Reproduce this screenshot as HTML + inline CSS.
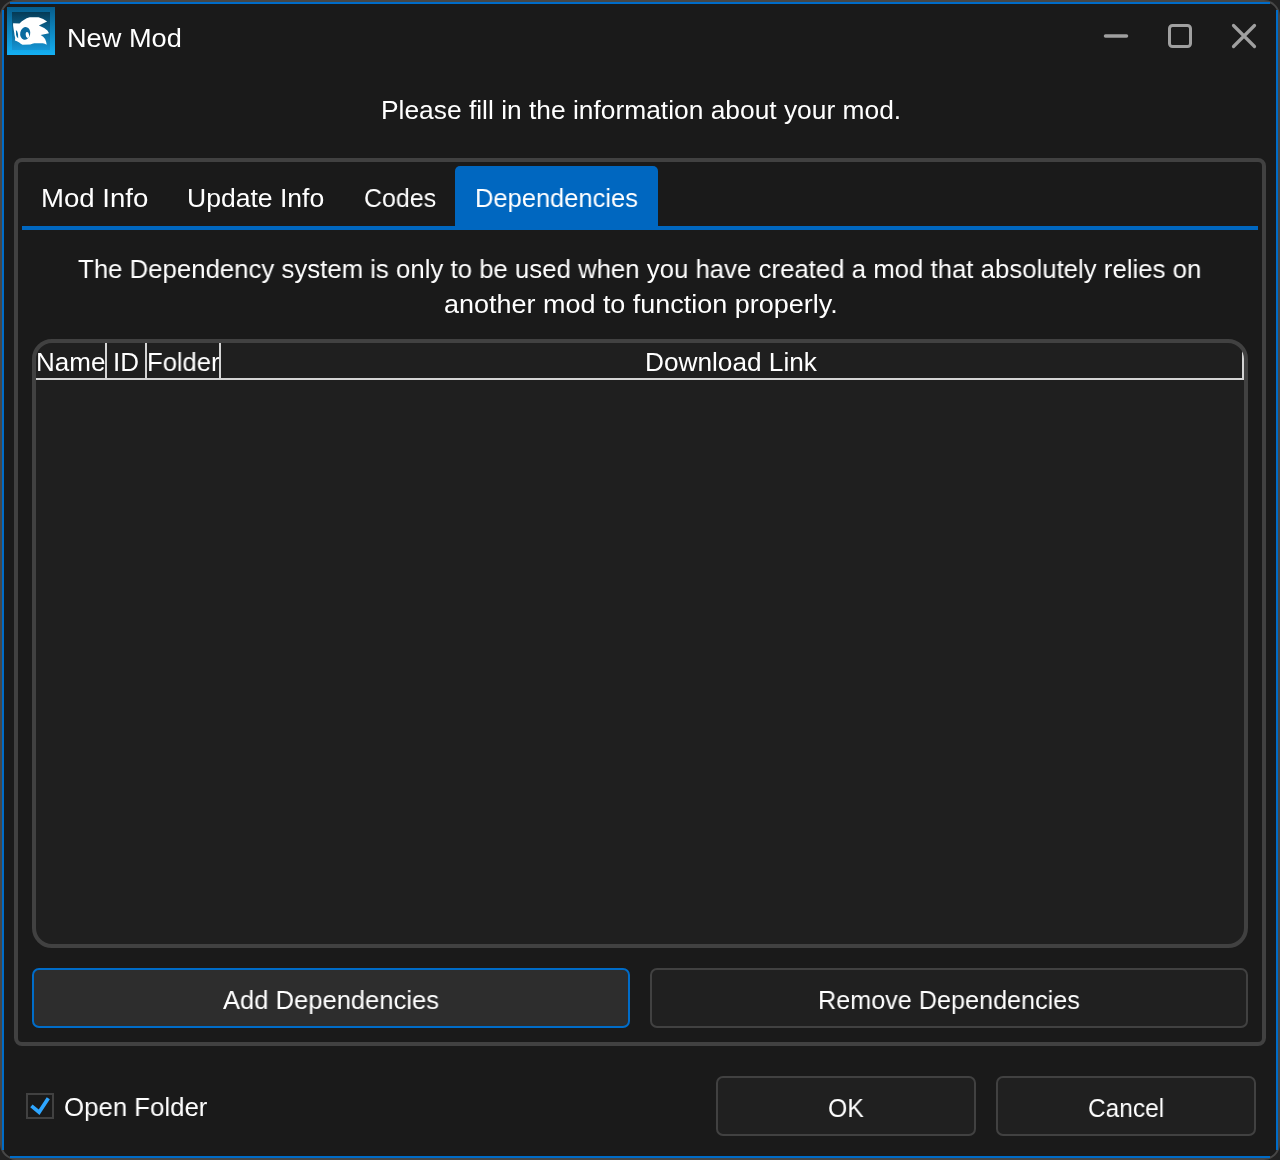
<!DOCTYPE html>
<html><head><meta charset="utf-8">
<style>
html,body{margin:0;padding:0;width:1280px;height:1160px;overflow:hidden;background:#222222;}
body{position:relative;font-family:"Liberation Sans",sans-serif;color:#fff;font-size:26px;}
.abs{position:absolute;}
.t{position:absolute;white-space:nowrap;line-height:30px;height:30px;transform-origin:0 0;will-change:transform;}
#frame{position:absolute;left:0;top:0;width:1280px;height:1160px;border-radius:16px;background:#474747;}
#win{position:absolute;left:2px;top:2px;width:1276px;height:1156px;border-radius:14px;background:#1a1a1a;}
.bl{position:absolute;background:#006cc8;}
#group{position:absolute;left:14px;top:158px;width:1252px;height:888px;box-sizing:border-box;border:4px solid #414141;border-radius:8px;}
#tabline{position:absolute;left:22px;top:226px;width:1236px;height:4px;background:#0067c0;}
#tabact{position:absolute;left:455px;top:166px;width:203px;height:62px;background:#0067c0;border-radius:5px 5px 0 0;}
#table{position:absolute;left:32px;top:339px;width:1216px;height:609px;box-sizing:border-box;border:4px solid #414141;border-radius:20px;background:#1f1f1f;overflow:hidden;}
.hline{position:absolute;background:#d4d4d4;}
.btn{position:absolute;box-sizing:border-box;border:2px solid #414141;border-radius:7px;background:#202020;}
</style></head><body>
<div id="frame"></div>
<div id="win"></div>
<div class="bl" style="left:10px;top:2px;width:1260px;height:2px;"></div>
<div class="bl" style="left:10px;top:1156px;width:1260px;height:2px;"></div>
<div class="bl" style="left:2px;top:10px;width:2px;height:1140px;"></div>
<div class="bl" style="left:1276px;top:10px;width:2px;height:1140px;"></div>

<!-- app icon -->
<svg class="abs" style="left:0;top:0" width="60" height="60" viewBox="0 0 60 60">
  <defs>
    <linearGradient id="go" x1="0" y1="0" x2="0" y2="1">
      <stop offset="0" stop-color="#075d8c"/><stop offset="1" stop-color="#14b1f4"/>
    </linearGradient>
    <linearGradient id="gi" x1="0" y1="0" x2="0" y2="1">
      <stop offset="0" stop-color="#053a55"/><stop offset="1" stop-color="#1596d6"/>
    </linearGradient>
  </defs>
  <rect x="7" y="7" width="48" height="48" fill="url(#go)"/>
  <rect x="12" y="12" width="38" height="38" fill="url(#gi)"/>
  <path fill="#fff" d="M13.1 23.2 L19.5 23.5 Q21.5 21.2 23.8 19.9 Q26.5 17.9 29.7 17.2 L38.5 17.2 Q43.5 18.6 47.1 21.5 L38.9 25.5 Q44.4 27.7 47.4 30.4 L49 33.3 L40.7 35.1 Q43.5 36.8 45.1 38.9 Q46.3 41.5 46.7 44.8 Q44.8 43.4 42.8 43.2 L34.3 43.2 Q32.3 43.6 30.3 44.5 L22.5 44.8 Q20.6 43.8 19.2 42.5 Q16.8 41.2 14.9 40.5 L15.2 37.9 Q14.4 35.5 14.3 33 Q13.6 29.5 13.1 25.8 Z"/>
  <ellipse cx="25.2" cy="33.4" rx="5" ry="6.4" fill="#0a6a9e" transform="rotate(12 25.2 33.4)"/>
  <ellipse cx="27.4" cy="35" rx="1.65" ry="3.1" fill="#fff" transform="rotate(-8 27.4 35)"/>
  <path d="M15.9 30 Q17.6 31 18 34 L18.2 38.2 Q16.6 37.5 16.1 35 Z" fill="#0a6a9e"/>
</svg>

<div class="t" style="left:66.75px;top:23px;transform:scaleX(1.045);">New Mod</div>

<!-- caption buttons -->
<svg class="abs" style="left:1090px;top:10px" width="190" height="60" viewBox="1090 10 190 60">
  <line x1="1105.5" y1="36" x2="1126.5" y2="36" stroke="#a0a0a0" stroke-width="3.5" stroke-linecap="round"/>
  <rect x="1169.5" y="25.5" width="21" height="21" rx="3" ry="3" fill="none" stroke="#a0a0a0" stroke-width="3"/>
  <path d="M1233.5 25.5 L1254.5 46.5 M1254.5 25.5 L1233.5 46.5" stroke="#a0a0a0" stroke-width="3.2" stroke-linecap="round"/>
</svg>

<div class="t" style="left:380.5px;top:95px;transform:scaleX(1.0138);">Please fill in the information about your mod.</div>

<div id="group"></div>
<div id="tabact"></div>
<div id="tabline"></div>
<div class="t" style="left:41.3px;top:183px;transform:scaleX(1.061);">Mod Info</div>
<div class="t" style="left:187.4px;top:183px;transform:scaleX(1.021);">Update Info</div>
<div class="t" style="left:363.8px;top:183px;transform:scaleX(0.959);">Codes</div>
<div class="t" style="left:475.3px;top:183px;transform:scaleX(0.98);">Dependencies</div>

<div class="t" style="left:78px;top:254px;transform:scaleX(0.9913);">The Dependency system is only to be used when you have created a mod that absolutely relies on</div>
<div class="t" style="left:444px;top:289px;transform:scaleX(1.037);">another mod to function properly.</div>

<div id="table">
  <div class="hline" style="left:0;top:35px;width:1208px;height:2px;"></div>
  <div class="hline" style="left:69px;top:0;width:2px;height:36px;"></div>
  <div class="hline" style="left:109px;top:0;width:2px;height:36px;"></div>
  <div class="hline" style="left:183px;top:0;width:2px;height:36px;"></div>
  <div class="hline" style="left:1206px;top:0;width:2px;height:36px;"></div>
</div>
<div class="t" style="left:35.7px;top:347px;transform:scaleX(0.997);">Name</div>
<div class="t" style="left:112.6px;top:347px;transform:scaleX(0.99);">ID</div>
<div class="t" style="left:147px;top:347px;transform:scaleX(0.985);">Folder</div>
<div class="t" style="left:645.4px;top:347px;transform:scaleX(1.008);">Download Link</div>

<div class="btn" style="left:32px;top:968px;width:598px;height:60px;border-color:#006cc8;background:#2d2d2d;"></div>
<div class="btn" style="left:650px;top:968px;width:598px;height:60px;"></div>
<div class="t" style="left:223.1px;top:985px;transform:scaleX(0.983);">Add Dependencies</div>
<div class="t" style="left:817.8px;top:985px;transform:scaleX(0.969);">Remove Dependencies</div>

<!-- checkbox -->
<div class="abs" style="left:26px;top:1093px;width:28px;height:26px;box-sizing:border-box;border:2px solid #414141;"></div>
<svg class="abs" style="left:0;top:1080px" width="60" height="50" viewBox="0 1080 60 50">
  <path d="M31.4 1105.8 L39.1 1112.2 L48.3 1098.2" fill="none" stroke="#2ea6ff" stroke-width="3.7"/>
</svg>
<div class="t" style="left:63.75px;top:1092px;transform:scaleX(0.992);">Open Folder</div>

<div class="btn" style="left:716px;top:1076px;width:260px;height:60px;"></div>
<div class="btn" style="left:996px;top:1076px;width:260px;height:60px;"></div>
<div class="t" style="left:828.1px;top:1093px;transform:scaleX(0.953);">OK</div>
<div class="t" style="left:1087.8px;top:1093px;transform:scaleX(0.94);">Cancel</div>
</body></html>
